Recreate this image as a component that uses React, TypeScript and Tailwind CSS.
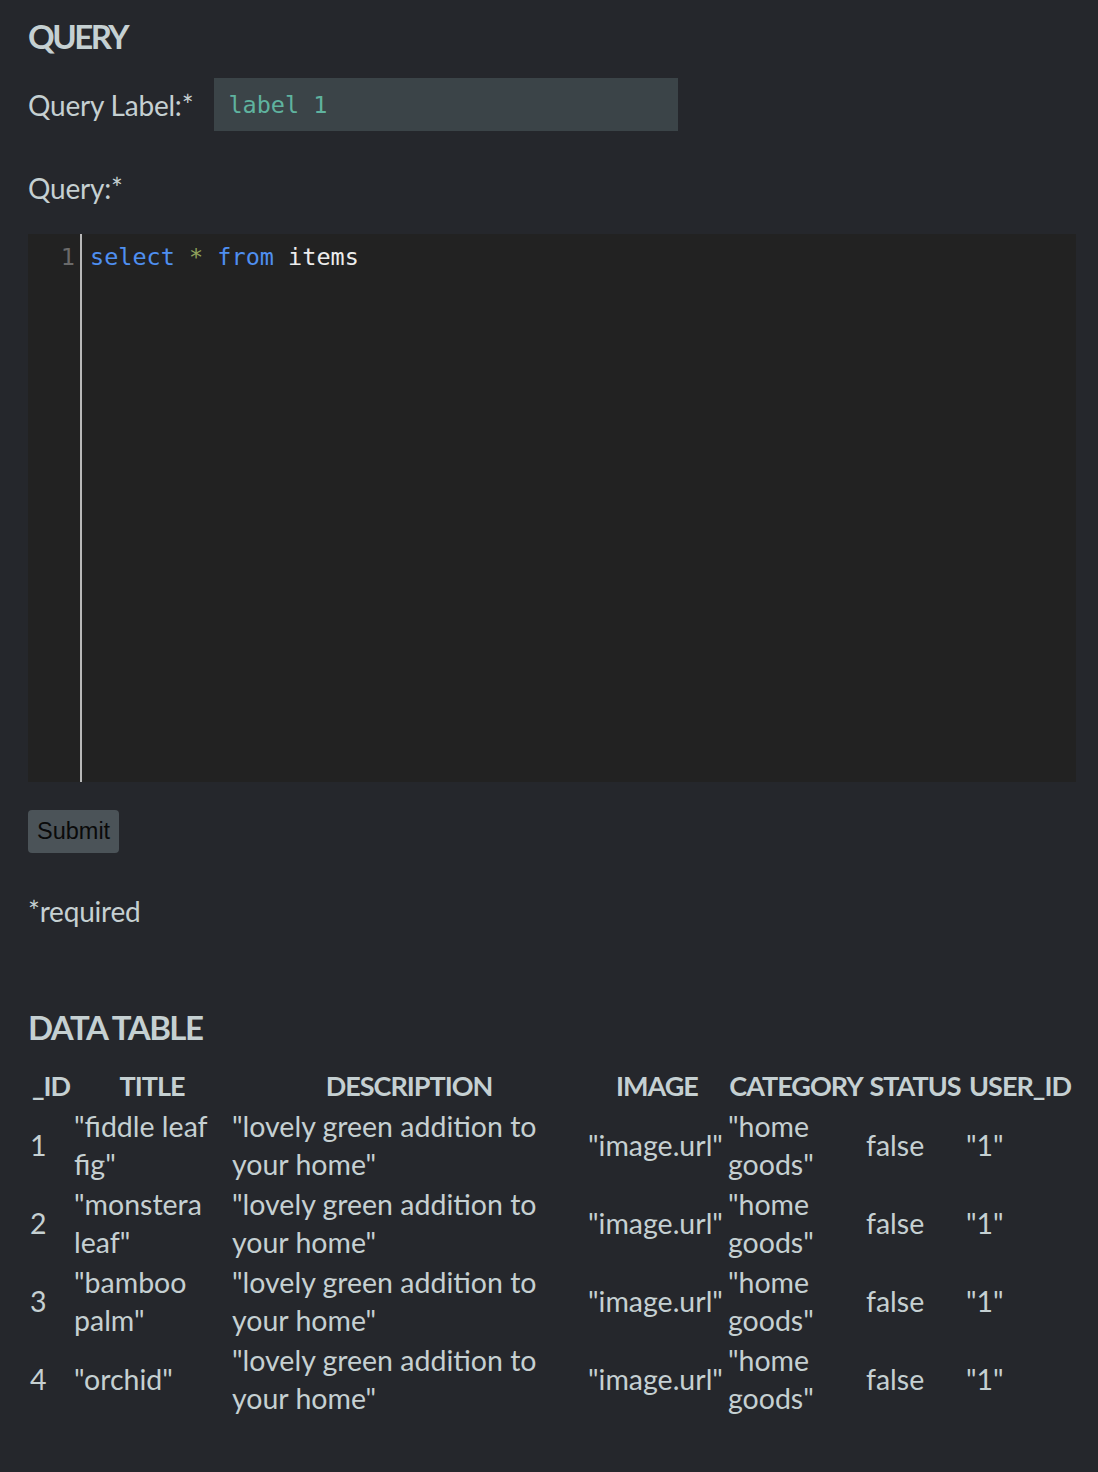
import React from 'react';

const columns = ['_ID', 'TITLE', 'DESCRIPTION', 'IMAGE', 'CATEGORY', 'STATUS', 'USER_ID'];

const rows = [
  { id: 1, title: '"fiddle leaf fig"' },
  { id: 2, title: '"monstera leaf"' },
  { id: 3, title: '"bamboo palm"' },
  { id: 4, title: '"orchid"' },
];

export default function App() {
  return (
    <div className="min-h-screen bg-[#25272c] pl-[28px] pr-[22px] pt-[12px] pb-[40px] font-['Lato','Noto_Sans',sans-serif] text-[#c5d0d2]">
      <h2 className="text-[33px] leading-[48px] font-bold tracking-[-2.5px]">QUERY</h2>

      <div className="mt-[18px] flex items-center gap-[21px]">
        <label className="text-[28px] leading-[36px] tracking-[-0.2px]">Query Label:*</label>
        <input
          type="text"
          defaultValue="label 1"
          className="h-[53px] w-[464px] bg-[#3b4448] px-[14px] font-['DejaVu_Sans_Mono',monospace] text-[23.5px] text-[#5fb39f] outline-none"
        />
      </div>

      <div className="mt-[39px] text-[28px] leading-[36px] tracking-[-0.2px]">Query:*</div>

      <div className="mt-[28px] flex h-[548px] w-full bg-[#222222] font-['DejaVu_Sans_Mono',monospace] text-[23.5px] leading-[30px]">
        <div className="w-[54px] shrink-0 border-r-2 border-[#b8b8b8] pt-[8px] pr-[5px] text-right text-[#6a6a6a]">1</div>
        <div className="pt-[8px] pl-[8px]">
          <span className="text-[#4f8ff0]">select</span>{' '}
          <span className="text-[#8fa25c]">*</span>{' '}
          <span className="text-[#4f8ff0]">from</span>{' '}
          <span className="text-[#ececec]">items</span>
        </div>
      </div>

      <button className="mt-[28px] h-[43px] rounded-[4px] bg-[#4b5358] px-[9px] font-['Liberation_Sans',sans-serif] text-[23.5px] text-[#0a0a0a]">
        Submit
      </button>

      <p className="mt-[40px] text-[28px] leading-[36px] tracking-[-0.2px]">*required</p>

      <h2 className="mt-[74px] text-[33px] leading-[48px] font-bold tracking-[-1.5px]">DATA TABLE</h2>

      <table className="mt-[14px] w-[1048px] table-fixed border-separate border-spacing-[2px] text-[28.5px] leading-[38px]">
        <colgroup>
          <col className="w-[42px]" />
          <col className="w-[156px]" />
          <col className="w-[354px]" />
          <col className="w-[138px]" />
          <col className="w-[136px]" />
          <col className="w-[98px]" />
          <col className="w-[108px]" />
        </colgroup>
        <thead>
          <tr>
            {columns.map((c) => (
              <th key={c} className="whitespace-nowrap text-center text-[27px] font-bold tracking-[-1px]">
                {c}
              </th>
            ))}
          </tr>
        </thead>
        <tbody>
          {rows.map((r) => (
            <tr key={r.id}>
              <td className="align-middle">{r.id}</td>
              <td className="align-middle">{r.title}</td>
              <td className="pr-[30px] align-middle">"lovely green addition to your home"</td>
              <td className="whitespace-nowrap align-middle">"image.url"</td>
              <td className="align-middle">"home goods"</td>
              <td className="align-middle">false</td>
              <td className="align-middle">"1"</td>
            </tr>
          ))}
        </tbody>
      </table>
    </div>
  );
}
